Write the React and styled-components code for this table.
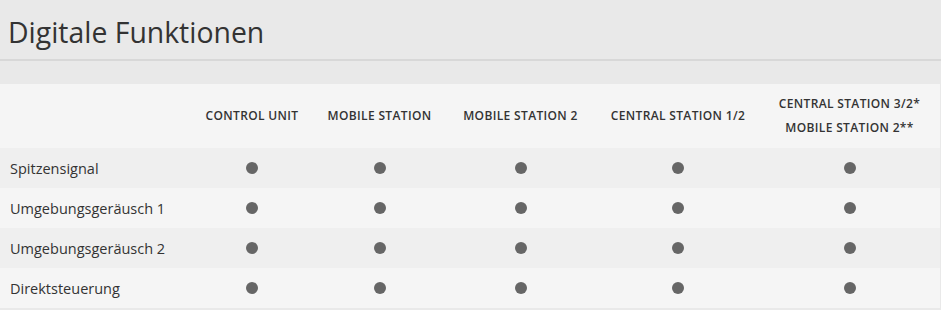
import React from 'react'
import styled, { createGlobalStyle } from 'styled-components'

const GlobalStyle = createGlobalStyle`
  html, body {
    margin: 0;
    padding: 0;
    background: #e9e9e9;
    font-family: "Open Sans", "Liberation Sans", sans-serif;
    color: #333;
  }
`;

const Page = styled.div`
  width: 941px;
  height: 310px;
  overflow: hidden;
`;

const Title = styled.h2`
  margin: 0;
  padding: 12px 8px 0;
  height: 47px;
  font-size: 28.4px;
  font-weight: 400;
  line-height: 40px;
  color: #333;
  border-bottom: 2px solid #d8d8d8;
`;

const Table = styled.table`
  margin-top: 23px;
  width: 940px;
  border-collapse: collapse;
  font-size: 14.5px;
`;

const HeadRow = styled.tr`
  background: #f5f5f5;
  height: 64px;
`;

const HeadCell = styled.th`
  width: ${p => p.w}px;
  padding: 0;
  font-size: 12px;
  font-weight: 600;
  letter-spacing: 0.35px;
  line-height: 24px;
  text-transform: uppercase;
  text-align: center;
  color: #333;
  vertical-align: middle;
`;

const Row = styled.tr`
  height: 40px;
  background: ${p => (p.$odd ? '#efefef' : '#f5f5f5')};
`;

const Label = styled.td`
  padding: 0 10px;
  text-align: left;
  vertical-align: middle;
`;

const Cell = styled.td`
  text-align: center;
  vertical-align: middle;
  padding: 0;
`;

const Dot = styled.span`
  display: block;
  margin: 0 auto;
  width: 12px;
  height: 12px;
  border-radius: 50%;
  background: #666;
`;

const rows = ['Spitzensignal', 'Umgebungsgeräusch 1', 'Umgebungsgeräusch 2', 'Direktsteuerung'];

export default function App() {
  return (
    <Page>
      <GlobalStyle />
      <Title>Digitale Funktionen</Title>
      <Table>
        <thead>
          <HeadRow>
            <HeadCell w={189} />
            <HeadCell w={126}>Control Unit</HeadCell>
            <HeadCell w={129}>Mobile Station</HeadCell>
            <HeadCell w={153}>Mobile Station 2</HeadCell>
            <HeadCell w={162}>Central Station 1/2</HeadCell>
            <HeadCell w={181}>
              Central Station 3/2*
              <br />
              Mobile Station 2**
            </HeadCell>
          </HeadRow>
        </thead>
        <tbody>
          {rows.map((r, i) => (
            <Row key={r} $odd={i % 2 === 0}>
              <Label>{r}</Label>
              {[0, 1, 2, 3, 4].map(c => (
                <Cell key={c}>
                  <Dot />
                </Cell>
              ))}
            </Row>
          ))}
        </tbody>
      </Table>
    </Page>
  )
}
